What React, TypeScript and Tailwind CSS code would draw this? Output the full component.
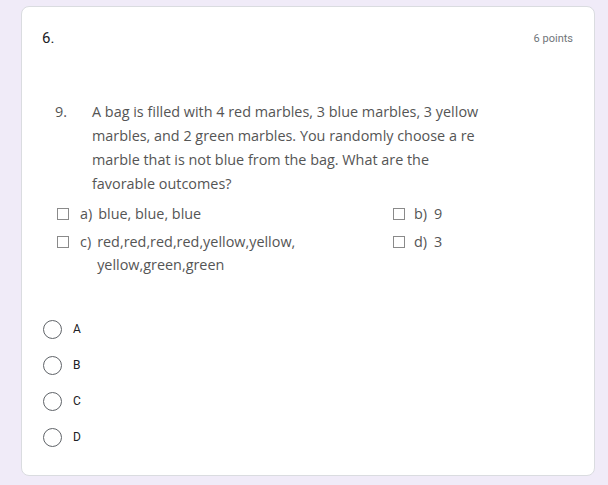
import React from "react";

const qFont = { fontFamily: '"Open Sans", "Noto Sans", sans-serif' };

function Box() {
  return <span className="inline-block w-[12px] h-[12px] border border-[#8a8a8a] bg-white shrink-0" />;
}

function Radio({ label }: { label: string }) {
  return (
    <div className="flex items-center h-[36px]">
      <span className="w-[19px] h-[19px] rounded-full border-[1.5px] border-[#5f6368] box-border shrink-0" />
      <span className="ml-[11px] text-[12px] text-[#202124]" style={{ fontFamily: 'Roboto, Arial, sans-serif' }}>{label}</span>
    </div>
  );
}

export default function App() {
  return (
    <div className="w-[608px] h-[485px] bg-[#f0ebf8] pt-[6px] pl-[21px] overflow-hidden">
      <div className="w-[574px] h-[470px] bg-white rounded-[8px] border border-[#dadce0] box-border pl-[20px] pr-[21px] pt-[21px]">
        <div className="flex justify-between items-start">
          <div className="text-[15px] leading-[20px] text-[#202124]" style={{ fontFamily: 'Roboto, Arial, sans-serif' }}>6.</div>
          <div className="text-[11px] leading-[20px] text-[#70757a] mt-[1px]" style={{ fontFamily: 'Roboto, Arial, sans-serif' }}>6 points</div>
        </div>
        <div className="mt-[51px] text-[14.4px] text-[#555555]" style={qFont}>
          <div className="flex leading-[24px]">
            <span className="pl-[13px] w-[50px] shrink-0">9.</span>
            <div className="whitespace-nowrap">
              <div>A bag is filled with 4 red marbles, 3 blue marbles, 3 yellow</div>
              <div>marbles, and 2 green marbles. You randomly choose a re</div>
              <div>marble that is not blue from the bag. What are the</div>
              <div>favorable outcomes?</div>
            </div>
          </div>
          <div className="mt-[6px] flex pl-[15px]">
            <div className="w-[336px] shrink-0">
              <div className="flex items-center h-[24px]">
                <Box />
                <span className="ml-[11px]">a)</span>
                <span className="ml-[6px]">blue, blue, blue</span>
              </div>
              <div className="flex mt-[4px] leading-[23px]">
                <div className="h-[23px] flex items-center"><Box /></div>
                <span className="ml-[11px]">c)</span>
                <span className="ml-[6px] whitespace-nowrap">red,red,red,red,yellow,yellow,<br />yellow,green,green</span>
              </div>
            </div>
            <div>
              <div className="flex items-center h-[24px]">
                <Box />
                <span className="ml-[9px]">b)</span>
                <span className="ml-[7px]">9</span>
              </div>
              <div className="flex items-center h-[24px] mt-[4px]">
                <Box />
                <span className="ml-[9px]">d)</span>
                <span className="ml-[7px]">3</span>
              </div>
            </div>
          </div>
        </div>
        <div className="mt-[35px] pl-[1px]">
          <Radio label="A" />
          <Radio label="B" />
          <Radio label="C" />
          <Radio label="D" />
        </div>
      </div>
    </div>
  );
}
